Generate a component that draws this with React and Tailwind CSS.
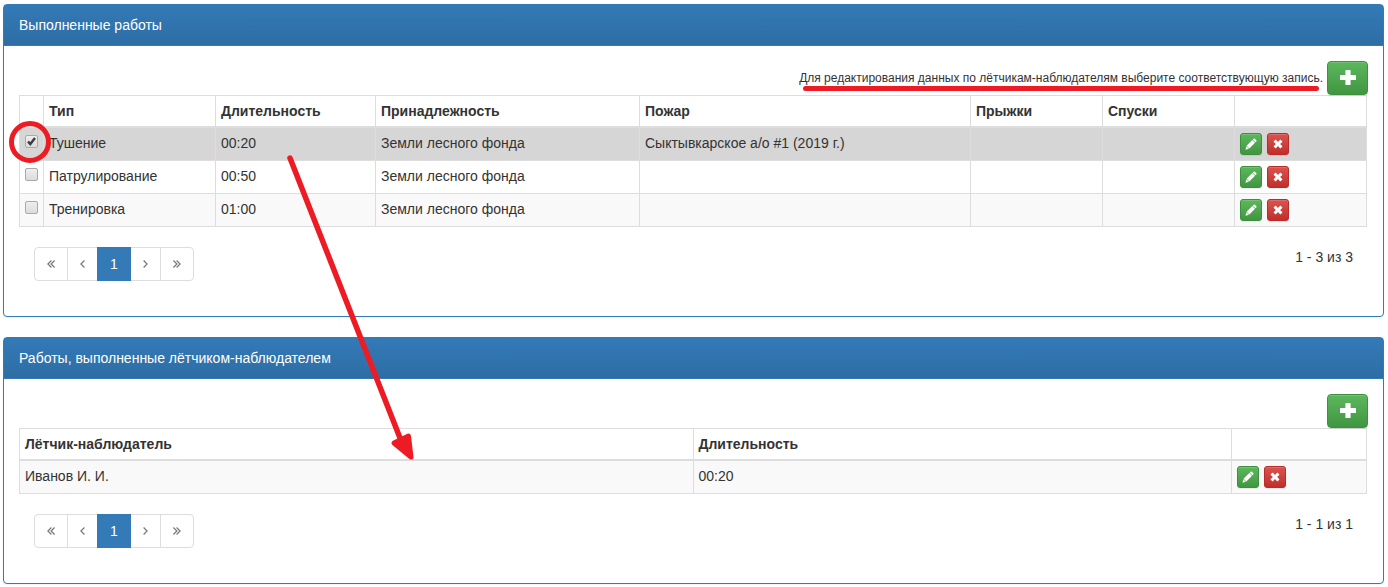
const works = [
  { id: 1, type: 'Тушение', duration: '00:20', owner: 'Земли лесного фонда', fire: 'Сыктывкарское а/о #1 (2019 г.)', selected: true },
  { id: 2, type: 'Патрулирование', duration: '00:50', owner: 'Земли лесного фонда', fire: '' },
  { id: 3, type: 'Тренировка', duration: '01:00', owner: 'Земли лесного фонда', fire: '' },
]

const observers = [{ id: 1, name: 'Иванов И. И.', duration: '00:20' }]

const th = 'border border-b-2 border-[#ddd] p-[5px] text-left font-bold'
const td = 'border border-[#ddd] p-[5px] align-top'

function PlusIcon() {
  return (
    <svg width="16" height="16" viewBox="0 0 16 16" fill="currentColor" aria-hidden="true">
      <path d="M6 0h4a.6.6 0 0 1 .6.6v4.300h4.800a.6.6 0 0 1 .6.6v4a.6.6 0 0 1-.6.6h-4.800v4.300a.6.6 0 0 1-.6.6H6a.6.6 0 0 1-.6-.6v-4.300H.6a.6.6 0 0 1-.6-.6v-4a.6.6 0 0 1 .6-.6h4.800V.6A.6.6 0 0 1 6 0z" />
    </svg>
  )
}

function PencilIcon() {
  return (
    <svg width="12" height="12" viewBox="0 0 12 12" fill="currentColor" aria-hidden="true">
      <path d="M8.700.8a.9.9 0 0 1 1.200 0l1.400 1.400a.9.9 0 0 1 0 1.200l-.9.9-2.600-2.600z" />
      <path d="M7.300 2.100l2.700 2.700-5.700 5.700-2.700-2.700z" />
      <path d="M1.300 8.200l2.600 2.600-3.400 1z" />
    </svg>
  )
}

function RemoveIcon() {
  return (
    <svg width="12" height="12" viewBox="0 0 12 12" fill="currentColor" aria-hidden="true">
      <path d="M3.900 1.800L6 3.900l2.100-2.100a.4.4 0 0 1 .6 0l1.500 1.500a.4.4 0 0 1 0 .6L8.100 6l2.100 2.100a.4.4 0 0 1 0 .6l-1.500 1.500a.4.4 0 0 1-.6 0L6 8.100l-2.100 2.100a.4.4 0 0 1-.6 0L1.800 8.700a.4.4 0 0 1 0-.6L3.900 6 1.800 3.900a.4.4 0 0 1 0-.6l1.500-1.500a.4.4 0 0 1 .6 0z" />
    </svg>
  )
}

function Angle({ double = false, right = false }) {
  const w = double ? 8 : 5
  return (
    <svg
      width={w}
      height="8"
      viewBox={`0 0 ${w} 8`}
      fill="none"
      stroke="currentColor"
      strokeWidth="1.2"
      className={right ? 'rotate-180' : ''}
      aria-hidden="true"
    >
      <path d="M4.400.5L.9 4l3.500 3.500" />
      {double && <path d="M7.600.5L4.100 4l3.500 3.500" />}
    </svg>
  )
}

function AddButton() {
  return (
    <button
      type="button"
      aria-label="Добавить"
      className="flex h-[34px] w-[41px] items-center justify-center rounded border border-[#3e8f3e] bg-linear-to-b from-[#5cb85c] to-[#419641] text-white shadow-[inset_0_1px_0_rgba(255,255,255,.15),0_1px_1px_rgba(0,0,0,.075)]"
    >
      <PlusIcon />
    </button>
  )
}

function RowActions() {
  return (
    <div className="flex gap-[5px]">
      <button
        type="button"
        aria-label="Редактировать"
        className="flex size-[22px] items-center justify-center rounded-[3px] border border-[#3e8f3e] bg-linear-to-b from-[#5cb85c] to-[#419641] text-white shadow-[inset_0_1px_0_rgba(255,255,255,.15),0_1px_1px_rgba(0,0,0,.075)]"
      >
        <PencilIcon />
      </button>
      <button
        type="button"
        aria-label="Удалить"
        className="flex size-[22px] items-center justify-center rounded-[3px] border border-[#b92c28] bg-linear-to-b from-[#d9534f] to-[#c12e2a] text-white shadow-[inset_0_1px_0_rgba(255,255,255,.15),0_1px_1px_rgba(0,0,0,.075)]"
      >
        <RemoveIcon />
      </button>
    </div>
  )
}

function RowCheckbox({ label, checked }) {
  return (
    <div className="relative mt-[2px] size-[13px]">
      <input
        type="checkbox"
        aria-label={label}
        defaultChecked={checked}
        className="peer block size-[13px] appearance-none rounded-[2px] border border-[#aaa] bg-linear-to-b from-[#eee] to-[#dcdcdc]"
      />
      <svg className="pointer-events-none absolute inset-0 hidden peer-checked:block" width="13" height="13" viewBox="0 0 13 13" fill="none" stroke="#3c3c3c" strokeWidth="2.4">
        <path d="M3 6.500l2.300 2.600L10 3" />
      </svg>
    </div>
  )
}

function Pager({ total }) {
  const item = 'flex h-[34px] items-center justify-center border border-[#ddd] text-[#777]'
  return (
    <div className="my-5 flex items-start justify-between px-[15px]">
      <nav aria-label="Страницы" className="flex">
        <button type="button" aria-label="Первая" className={`${item} w-[34px] rounded-l`}><Angle double /></button>
        <button type="button" aria-label="Предыдущая" className={`${item} -ml-px w-[31px]`}><Angle /></button>
        <button type="button" className="z-10 -ml-px h-[34px] w-[34px] border border-[#337ab7] bg-[#337ab7] text-white">1</button>
        <button type="button" aria-label="Следующая" className={`${item} -ml-px w-[31px]`}><Angle right /></button>
        <button type="button" aria-label="Последняя" className={`${item} -ml-px w-[34px] rounded-r`}><Angle double right /></button>
      </nav>
      <span>{`1 - ${total} из ${total}`}</span>
    </div>
  )
}

function Panel({ title, note, children }) {
  return (
    <section className="rounded border border-[#337ab7] bg-white shadow-[0_1px_2px_rgba(0,0,0,.05)]">
      <h2 className="border-b border-[#337ab7] bg-linear-to-b from-[#337ab7] to-[#2e6da4] px-[15px] py-[10px] text-white">{title}</h2>
      <div className="p-[15px]">
        <div className="flex items-center justify-end gap-1">
          {note && (
            <p className="relative text-[12px]">
              {note}
              <span className="absolute inset-x-1 top-[18px] h-[5px] rounded-full bg-[#ed1c24]" />
            </p>
          )}
          <AddButton />
        </div>
        {children}
      </div>
    </section>
  )
}

// red hand-drawn marks: circle round the ticked row and arrow to the second table
function Marks() {
  return (
    <svg className="pointer-events-none absolute top-0 left-0 z-20" width="430" height="480" fill="none" stroke="#ed1c24" aria-hidden="true">
      <circle cx="30" cy="142" r="18.5" strokeWidth="5" />
      <path d="M290 158L402 443" strokeWidth="5.500" strokeLinecap="round" />
      <path d="M394 443L408.500 436L411 457Z" fill="#ed1c24" strokeWidth="5" strokeLinejoin="round" />
    </svg>
  )
}

export default function App() {
  return (
    <main className="relative flex flex-col gap-5 bg-white py-1 pr-1 pl-[3px] font-['Liberation_Sans',Arial,sans-serif] text-[14px] leading-5 text-[#333]">
      <Panel title="Выполненные работы" note="Для редактирования данных по лётчикам-наблюдателям выберите соответствующую запись.">
        <div className="pr-px">
          <table className="w-full table-fixed border-collapse">
            <colgroup>
              <col className="w-[24px]" />
              <col className="w-[172px]" />
              <col className="w-[160px]" />
              <col className="w-[264px]" />
              <col />
              <col className="w-[132px]" />
              <col className="w-[132px]" />
              <col className="w-[132px]" />
            </colgroup>
            <thead>
              <tr>
                <th className={th} />
                <th className={th}>Тип</th>
                <th className={th}>Длительность</th>
                <th className={th}>Принадлежность</th>
                <th className={th}>Пожар</th>
                <th className={th}>Прыжки</th>
                <th className={th}>Спуски</th>
                <th className={th} />
              </tr>
            </thead>
            <tbody>
              {works.map((w) => (
                <tr key={w.id} className={w.selected ? 'bg-[#d6d6d6]' : 'even:bg-white odd:bg-[#f9f9f9]'}>
                  <td className={td}><RowCheckbox label={w.type} checked={w.selected} /></td>
                  <td className={td}>{w.type}</td>
                  <td className={td}>{w.duration}</td>
                  <td className={td}>{w.owner}</td>
                  <td className={td}>{w.fire}</td>
                  <td className={td} />
                  <td className={td} />
                  <td className={td}><RowActions /></td>
                </tr>
              ))}
            </tbody>
          </table>
        </div>
        <Pager total={3} />
      </Panel>

      <Panel title="Работы, выполненные лётчиком-наблюдателем">
        <div className="pr-px">
          <table className="w-full table-fixed border-collapse">
            <colgroup>
              <col className="w-[50%]" />
              <col className="w-[40%]" />
              <col className="w-[10%]" />
            </colgroup>
            <thead>
              <tr>
                <th className={th}>Лётчик-наблюдатель</th>
                <th className={th}>Длительность</th>
                <th className={th} />
              </tr>
            </thead>
            <tbody>
              {observers.map((o) => (
                <tr key={o.id} className="bg-[#f9f9f9]">
                  <td className={td}>{o.name}</td>
                  <td className={td}>{o.duration}</td>
                  <td className={td}><RowActions /></td>
                </tr>
              ))}
            </tbody>
          </table>
        </div>
        <Pager total={1} />
      </Panel>
      <Marks />
    </main>
  )
}
